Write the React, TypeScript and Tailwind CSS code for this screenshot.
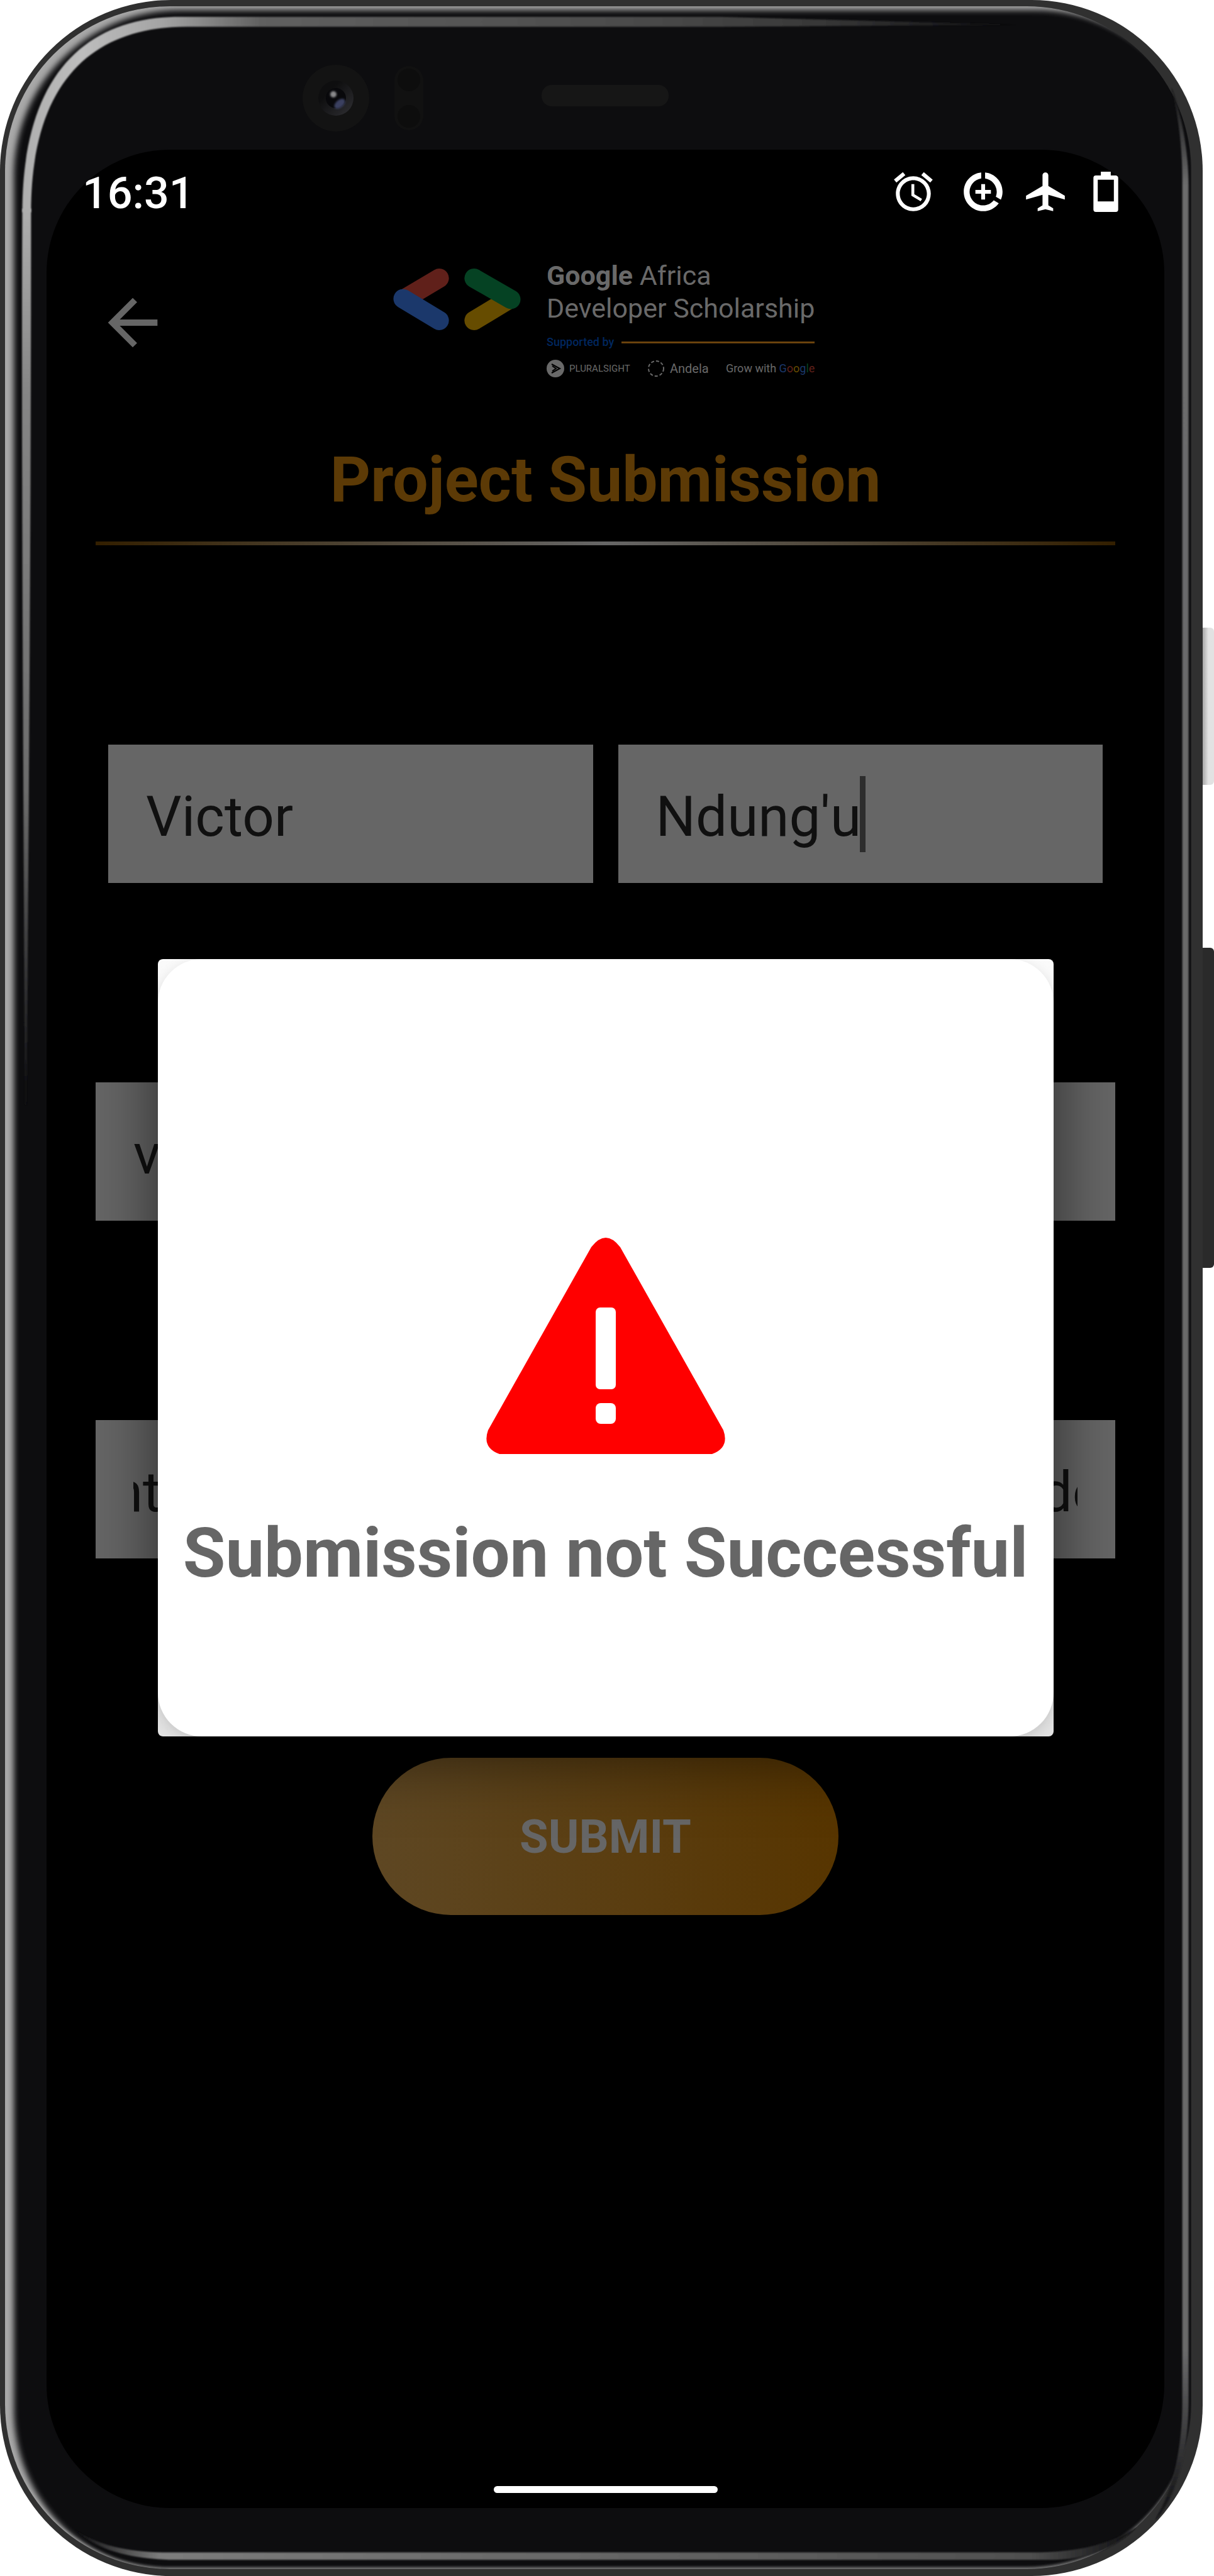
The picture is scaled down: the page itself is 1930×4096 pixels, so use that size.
import React from "react";
import { MdAccessAlarm, MdAirplanemodeActive, MdArrowBack } from "react-icons/md";

function FrameReflections() {
  return (
    <svg
      aria-hidden="true"
      className="pointer-events-none absolute inset-0 h-full w-full"
      viewBox="0 0 1955 4150"
      preserveAspectRatio="none"
      fill="none"
    >
      <defs>
        <linearGradient id="topInner" x1="0" y1="0" x2="1" y2="0">
          <stop offset="0" stopColor="#aeaeae" />
          <stop offset="0.06" stopColor="#bdbdbd" />
          <stop offset="0.14" stopColor="#a4a4a4" />
          <stop offset="0.24" stopColor="#606060" />
          <stop offset="0.6" stopColor="#4c4c4c" />
          <stop offset="0.8" stopColor="#383838" />
          <stop offset="1" stopColor="#0d0d0f" />
        </linearGradient>
        <linearGradient id="leftInner" x1="0" y1="340" x2="0" y2="1780" gradientUnits="userSpaceOnUse">
          <stop offset="0" stopColor="#aeaeae" />
          <stop offset="0.2" stopColor="#868686" />
          <stop offset="0.65" stopColor="#6c6c6c" />
          <stop offset="1" stopColor="#0d0d0f" />
        </linearGradient>
        <linearGradient id="rightInner" x1="0" y1="0" x2="0" y2="1">
          <stop offset="0" stopColor="#0d0d0f" />
          <stop offset="0.04" stopColor="#6c6c6c" />
          <stop offset="0.93" stopColor="#6a6a6b" />
          <stop offset="1" stopColor="#0d0d0f" />
        </linearGradient>
        <linearGradient id="bottomInner" x1="0" y1="0" x2="1" y2="0">
          <stop offset="0" stopColor="#0d0d0f" />
          <stop offset="0.08" stopColor="#7c7c7c" />
          <stop offset="0.9" stopColor="#505050" />
          <stop offset="1" stopColor="#0d0d0f" />
        </linearGradient>
        <filter id="soft" x="-5%" y="-5%" width="110%" height="110%">
          <feGaussianBlur stdDeviation="1" />
        </filter>
        <filter id="softColumn" x="-100%" y="-5%" width="300%" height="110%">
          <feGaussianBlur stdDeviation="1" />
        </filter>
      </defs>
      <path
        d="M36 342 C36 130 130 27 290 27 L1160 27 L1640 40 L1160 43 L300 43 C150 43 50 130 50 342 Z"
        fill="url(#topInner)"
        filter="url(#soft)"
      />
      <path
        d="M36 336 L50 336 C50 700 48 1100 43 1780 L40 1780 C38 1300 34 700 36 336 Z"
        fill="url(#leftInner)"
        filter="url(#softColumn)"
      />
      <path
        d="M1904 290 C1904 230 1896 180 1886 140 C1902 180 1914 240 1914 300 L1914 3870 C1914 3960 1890 4030 1860 4060 C1890 4010 1904 3940 1904 3870 Z"
        fill="url(#rightInner)"
        filter="url(#softColumn)"
      />
      <path
        d="M120 4075 C160 4102 210 4112 270 4112 L1660 4112 C1730 4112 1780 4102 1830 4072 C1790 4112 1740 4124 1690 4124 L290 4124 C220 4124 160 4112 120 4075 Z"
        fill="url(#bottomInner)"
        filter="url(#soft)"
      />
    </svg>
  );
}

function Camera() {
  return (
    <svg aria-hidden="true" className="h-[106px] w-[106px]" viewBox="0 0 106 106">
      <defs>
        <linearGradient id="lens" x1="0" y1="0" x2="1" y2="1">
          <stop offset="0.3" stopColor="#0e0e0f" />
          <stop offset="1" stopColor="#303034" />
        </linearGradient>
        <filter id="lensBlur" x="-50%" y="-50%" width="200%" height="200%">
          <feGaussianBlur stdDeviation="1.5" />
        </filter>
      </defs>
      <circle cx="53" cy="53" r="53" fill="#131313" />
      <circle cx="53" cy="53" r="28" fill="url(#lens)" />
      <circle cx="53" cy="53" r="16" fill="#08080b" />
      <g filter="url(#lensBlur)">
        <ellipse cx="59" cy="62" rx="10" ry="6" fill="#3a4060" transform="rotate(-40 59 62)" />
        <circle cx="49" cy="47" r="5" fill="#8a8a8c" />
      </g>
    </svg>
  );
}

function DataSaverIcon() {
  return (
    <svg aria-label="Data saver" className="mr-[25px] ml-[37px] size-[74px]" viewBox="0 0 24 24" fill="currentColor">
      <path d="M11 8v3H8v2h3v3h2v-3h3v-2h-3V8h-2zm2-5.950v3.030c3.390.490 6 3.390 6 6.920 0 .900-.180 1.750-.480 2.540l2.600 1.530c.560-1.240.880-2.620.880-4.070 0-5.180-3.950-9.450-9-9.950zM12 19c-3.870 0-7-3.130-7-7 0-3.530 2.610-6.430 6-6.920V2.050c-5.060.500-9 4.760-9 9.950 0 5.520 4.470 10 9.990 10 3.310 0 6.240-1.610 8.060-4.090l-2.600-1.530C16.170 17.980 14.210 19 12 19z" />
    </svg>
  );
}

function BatteryIcon() {
  return (
    <svg aria-label="Battery low" className="ml-[39px] h-[64px] w-10" viewBox="0 0 40 65" fill="currentColor">
      <path
        fillRule="evenodd"
        d="M12 0h16v6h8a4 4 0 0 1 4 4v51a4 4 0 0 1-4 4H4a4 4 0 0 1-4-4V10a4 4 0 0 1 4-4h8zM7 13v35h26V13z"
      />
    </svg>
  );
}

function LogoMark() {
  return (
    <svg aria-hidden="true" className="h-[100px] w-[203px] shrink-0" viewBox="0 0 205 100">
      <g strokeWidth="31" strokeLinecap="round">
        <path d="M74 16L22 47" stroke="#60201a" />
        <path d="M16 49L74 84" stroke="#1b386b" />
        <path d="M130 84L183 52" stroke="#664c00" />
        <path d="M130 16L189 50" stroke="#054223" />
      </g>
    </svg>
  );
}

function AppLogo() {
  return (
    <div className="flex items-start gap-[41px] text-[#696969]">
      <div className="pt-[14px]">
        <LogoMark />
      </div>
      <div className="flex flex-col">
        <p className="text-[43px] leading-[52px]">
          <span className="font-bold">Google</span> Africa
        </p>
        <p className="text-[43px] leading-[52px]">Developer Scholarship</p>
        <div className="mt-4 flex items-center gap-3">
          <span className="text-[18px] leading-6 font-medium text-[#00275f]">Supported by</span>
          <span className="h-[3px] flex-1 bg-[#6b430d]" />
        </div>
        <div className="mt-4 flex items-center justify-between">
          <span className="flex items-center gap-2">
            <svg aria-hidden="true" className="size-7" viewBox="0 0 28 28">
              <circle cx="14" cy="14" r="14" fill="#696969" />
              <path d="M8 7l13 7-13 7M9 10l6 4-6 4" stroke="#000" strokeWidth="2" fill="none" />
            </svg>
            <span className="text-[15px] leading-7">PLURALSIGHT</span>
          </span>
          <span className="flex items-center gap-2">
            <svg aria-hidden="true" className="size-7" viewBox="0 0 28 28">
              <circle cx="14" cy="14" r="12" fill="none" stroke="#696969" strokeWidth="2" strokeDasharray="5 3" />
            </svg>
            <span className="text-[20px] leading-7">Andela</span>
          </span>
          <span className="text-[18px] leading-7">
            Grow with <span className="text-[#1b386b]">G</span>
            <span className="text-[#60201a]">o</span>
            <span className="text-[#664c00]">o</span>
            <span className="text-[#1b386b]">g</span>
            <span className="text-[#054223]">l</span>
            <span className="text-[#60201a]">e</span>
          </span>
        </div>
      </div>
    </div>
  );
}

const fieldClass =
  "block h-[220px] w-full rounded-none border-0 bg-[#666] px-[60px] pt-[8px] text-[89px] text-[#101010] outline-none";

function WarningIcon() {
  return (
    <svg aria-hidden="true" className="h-[344px] w-[382px]" viewBox="0 0 382 344">
      <path
        d="M168 15Q191 -15 214 15L378 306Q388 334 360 344H22Q-6 334 4 306Z"
        fill="#f00"
      />
      <rect x="175" y="111" width="32" height="130" rx="7" fill="#fff" />
      <rect x="175" y="263" width="32" height="33" rx="8" fill="#fff" />
    </svg>
  );
}

export default function App() {
  return (
    <main className="relative flex min-h-screen w-full bg-white pr-[18px] font-['Roboto',sans-serif]">
      <div className="absolute top-[998px] right-0 h-[250px] w-[18px] rounded-r-md bg-linear-to-r from-[#a8a8a8] via-[#e2e2e2] to-[#e2e2e2]" />
      <div className="absolute top-[1507px] right-0 h-[509px] w-[18px] rounded-r-md bg-[#2a2a2a]" />

      <div className="flex flex-1 rounded-[272px] bg-[#303030] pt-[10px] pr-[18px] pb-[11px] pl-[8px]">
        <div className="flex flex-1 flex-col rounded-[262px] bg-[#0d0d0f] px-[66px] pr-[43px] pb-[97px] shadow-[inset_16px_8px_10px_-2px_#a8a8a8,inset_0_-5px_4px_-2px_#777]">
          <div className="flex h-[228px] items-center pt-[64px] pl-[407px]">
            <div className="flex h-[106px] items-center gap-[40px]">
              <Camera />
              <div className="flex h-[102px] w-[46px] flex-col items-center justify-between rounded-full bg-[#111] p-1">
                <span className="size-9 rounded-full bg-[#0d0d0d]" />
                <span className="size-9 rounded-full bg-[#0d0d0d]" />
              </div>
            </div>
            <div className="mb-[8px] ml-[188px] h-[34px] w-[202px] rounded-2xl bg-[#161616]" />
          </div>

          <section className="relative flex flex-1 flex-col overflow-hidden rounded-[196px] bg-black">
            <div className="flex h-[138px] items-center justify-between pr-[73px] pl-[57px] text-white">
              <time className="text-[70px] font-medium">16:31</time>
              <div className="flex items-center pb-[4px]">
                <MdAccessAlarm size={74} aria-label="Alarm set" />
                <DataSaverIcon />
                <MdAirplanemodeActive size={74} aria-label="Airplane mode" />
                <BatteryIcon />
              </div>
            </div>

            <form className="flex flex-col px-[78px]" onSubmit={(e) => e.preventDefault()}>
              <header className="flex h-[214px] items-start pt-[36px]">
                <button type="button" aria-label="Back" className="pt-[42px] text-[#666]">
                  <MdArrowBack size={118} />
                </button>
                <div className="pl-[355px]">
                  <AppLogo />
                </div>
              </header>
              <h1 className="mt-[115px] text-center text-[100px] leading-[116px] font-bold text-[#5c3a06]">
                Project Submission
              </h1>
              <div className="mt-[40px] h-[6px] bg-[linear-gradient(90deg,#331f00,#666,#331f00)]" />

              <div className="mt-[317px] grid grid-cols-2 gap-[40px] px-[20px]">
                <input aria-label="First name" className={fieldClass} defaultValue="Victor" />
                <div className="relative">
                  <input aria-label="Last name" className={fieldClass} defaultValue="Ndung'u" />
                  <span className="absolute top-[50px] left-[384px] h-[121px] w-[9px] bg-[#2d2d2d]" />
                </div>
              </div>
              <input
                aria-label="Email address"
                className={`${fieldClass} mt-[317px]`}
                defaultValue="victor@example.com"
              />
              <input
                aria-label="GitHub link"
                className={`${fieldClass} mt-[317px] indent-[-34px]`}
                defaultValue="https://github.com/victorndungu/the-developer"
              />
              <button
                type="submit"
                className="mt-[317px] h-[250px] w-[741px] self-center rounded-full bg-[linear-gradient(90deg,#5e4723,#573500)] text-[74px] font-bold text-[#666]"
              >
                SUBMIT
              </button>
            </form>

            <div className="mt-auto mb-[24px] h-[11px] w-[356px] self-center rounded-full bg-white" />

            <div className="absolute inset-0 flex items-center justify-center pt-[60px]">
              <div
                role="alertdialog"
                aria-labelledby="dialog-title"
                className="w-[1424px] overflow-hidden rounded-lg bg-linear-to-b from-[#fafafa] to-[#e2e2e2] shadow-[0_30px_110px_rgba(0,0,0,0.6)]"
              >
                <div className="flex h-[1236px] flex-col items-center rounded-[70px] bg-white pt-[443px] shadow-[0_6px_20px_rgba(0,0,0,0.12)]">
                  <WarningIcon />
                  <p
                    id="dialog-title"
                    className="mt-[94px] text-center text-[110px] leading-[128px] font-bold whitespace-nowrap text-[#666]"
                  >
                    Submission not Successful
                  </p>
                </div>
              </div>
            </div>
          </section>
        </div>
      </div>
      <FrameReflections />
    </main>
  );
}
